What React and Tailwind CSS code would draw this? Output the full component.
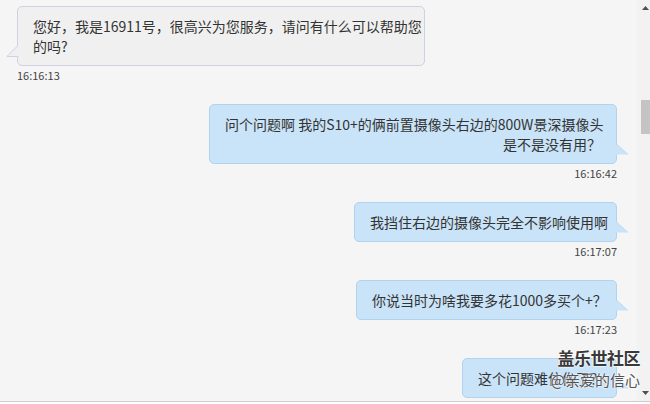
const font = { fontFamily: '"Noto Sans CJK SC", "Noto Sans", sans-serif' };

function Tail({ side }) {
  // small triangle near the bottom of the bubble
  if (side === 'left') {
    return (
      <svg className="absolute left-[-12px] bottom-[8px]" width="13" height="12" viewBox="0 0 13 12">
        <polygon points="12.5,0 1,11.5 12.5,11.5" fill="#f0f0f0" />
        <polyline points="12,0.5 0.8,11.5 12.5,11.5" fill="none" stroke="#cdd3e0" strokeWidth="1" />
      </svg>
    );
  }
  return (
    <svg className="absolute right-[-13px] bottom-[8px]" width="14" height="12" viewBox="0 0 14 12">
      <polygon points="0,0 13,11.5 0,11.5" fill="#c9e3f8" />
      <polyline points="1,0.5 13,11.5" fill="none" stroke="#b4d6f1" strokeWidth="0.8" />
    </svg>
  );
}

function Message({ side, lines, time, width, align = 'text-right' }) {
  const isLeft = side === 'left';
  return (
    <div className={`flex flex-col shrink-0 mb-[23px] ${isLeft ? 'items-start' : 'items-end'}`}>
      <div
        className={`relative rounded-[5px] border py-[9px] text-[14px] leading-[20px] text-[#333] ${
          isLeft ? 'bg-[#f0f0f0] border-[#cdd3e0] px-[15px] text-left' : `bg-[#c9e3f8] border-[#b0d3ef] px-[15px] ${align}`
        } ${width}`}
      >
        {lines.map((l, i) => (
          <div key={i} className="whitespace-nowrap">{l}</div>
        ))}
        <Tail side={side} />
      </div>
      {time && <div className="mt-[3px] text-[11px] leading-[12px] text-[#444]">{time}</div>}
    </div>
  );
}

function Scrollbar() {
  return (
    <div className="w-[13px] h-full bg-[#f2f2f2] flex flex-col items-end">
      <div className="w-[9px] h-[16px] flex items-center justify-center">
        <svg width="7" height="4" viewBox="0 0 7 4"><polygon points="3.5,0 7,4 0,4" fill="#505050" /></svg>
      </div>
      <div className="w-[9px] h-[34px] mt-[84px] bg-[#c4c4c4]" />
      <div className="flex-1" />
      <div className="w-[9px] h-[16px] flex items-center justify-center">
        <svg width="7" height="4" viewBox="0 0 7 4"><polygon points="0,0 7,0 3.5,4" fill="#505050" /></svg>
      </div>
    </div>
  );
}

export default function App() {
  return (
    <div className="relative w-[650px] h-[404px] bg-[#f5f5f5] flex flex-col overflow-hidden" style={font}>
      <div className="flex h-[401px]">
        <div className="flex-1 flex flex-col pt-[6px] pl-[17px] pr-[20px] overflow-hidden">
          <Message
            side="left"
            width="w-[408px]"
            lines={['您好，我是16911号，很高兴为您服务，请问有什么可以帮助您', '的吗?']}
            time="16:16:13"
          />
          <Message
            side="right"
            width="w-[408px]"
            lines={['问个问题啊 我的S10+的俩前置摄像头右边的800W景深摄像头', '是不是没有用？']}
            time="16:16:42"
          />
          <Message side="right" width="w-[263px]" align="text-center" lines={['我挡住右边的摄像头完全不影响使用啊']} time="16:17:07" />
          <Message side="right" width="w-[261px]" align="text-center" lines={['你说当时为啥我要多花1000多买个+？']} time="16:17:23" />
          <Message side="right" width="w-[155px]" align="text-center" lines={['这个问题难住你了？']} />
        </div>
        <Scrollbar />
      </div>
      <div className="h-[3px] border-t border-[#cccccc] bg-white" />

      {/* watermark */}
      <div className="absolute right-[10px] top-[349px] flex flex-col items-end leading-none">
        <div
          className="text-[17px] font-bold text-[#3a3a3a] tracking-[-0.5px]"
          style={{ textShadow: '0 0 2px #fff, 0 0 2px #fff, 0 0 1px #fff' }}
        >
          盖乐世社区
        </div>
        <div
          className="mt-[6px] text-[15px] text-[#555]"
          style={{ textShadow: '0 0 2px #fff, 0 0 2px #fff' }}
        >
          @亲爱的信心
        </div>
      </div>
    </div>
  );
}
